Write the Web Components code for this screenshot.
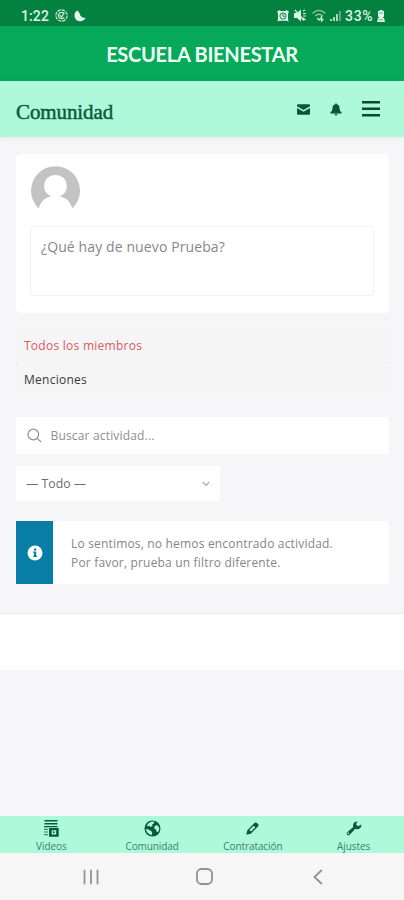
<!DOCTYPE html>
<html lang="es">
<head>
<meta charset="utf-8">
<title>Escuela Bienestar</title>
<style>
html,body{margin:0;height:900px;overflow:hidden}
body{background:#f6f6f8;font-family:"Open Sans","Noto Sans",sans-serif}
</style>
</head>
<body>
<community-app></community-app>
<script>
function define(name, css, html) {
  const t = document.createElement('template');
  t.innerHTML = '<style>*{box-sizing:border-box}svg{display:block}' + css + '</style>' + html;
  customElements.define(name, class extends HTMLElement {
    constructor() {
      super();
      this.attachShadow({mode: 'open'}).append(t.content.cloneNode(true));
    }
  });
}

define('status-bar', `
:host{display:flex;height:26px;background:#04803f;color:#dcf6e5;align-items:center;padding:5px 19px 0 21px;box-sizing:border-box;font:500 14px/20px Roboto,sans-serif}
.time{width:34px;font-size:14px;white-space:nowrap;letter-spacing:.1px}
.bat{font-size:14px;letter-spacing:.7px;margin-left:4px;width:32px;white-space:nowrap}
.sp{flex:1}`, `
<span class="time">1:22</span>
<svg width="13" height="13" viewBox="0 0 13 13" fill="none" stroke="#cdeedb" stroke-width="1.2"><circle cx="6.5" cy="6.5" r="5.6" stroke-dasharray="3.4 .9"/><path d="M9.3 8.2A3.2 3.2 0 1 1 9.5 5.2M4.7 5.8l1.8 2.3 2.6-4.2"/></svg>
<svg width="12" height="12" viewBox="0 0 12 12" fill="#e4faec" style="margin-left:6px"><path d="M3.200 .6C-.2 2.500-.2 7.500 2.200 9.700 5 12.400 10 11.800 11.700 7.600 9.800 8.200 8 7.500 6.900 6.300 5.700 5 6 2.500 3.200 .6Z"/></svg>
<span class="sp"></span>
<svg width="12" height="12" viewBox="0 0 12 12"><path d="M0 1.700 2.500 0l1 1h5l1-1L12 1.700l-1 2V9l.6 2.500-2.200-.8H2.600L.4 11.500 1 9V3.700Z" fill="#dcf6e5"/><circle cx="6" cy="6" r="3.100" fill="none" stroke="#04803f" stroke-width="1"/><path d="M6 4v2.300h1.700" fill="none" stroke="#04803f"/></svg>
<svg width="13" height="13" viewBox="0 0 13 13" style="margin-left:5px"><path d="M0 4h3l4-3.500v12L3 9H0Z" fill="#dcf6e5"/><path d="M1 1l9 10.500M9 4.500h3M9 7h3M9 2l2-1M9 9l2.500 2" stroke="#dcf6e5" stroke-width="1.200"/></svg>
<svg width="14" height="13" viewBox="0 0 14 13" fill="none" stroke="#8bc7a6" stroke-width="1.300" style="margin-left:5px"><path d="M.5 4.500Q7-1.800 13.500 4.500M3 7.100Q7 3.300 11 7.100"/><path d="M5 9l2 2 2-2M9.500 7v5l2-2" stroke="#c8ead6"/></svg>
<svg width="11" height="13" viewBox="0 0 11 13" style="margin-left:4px"><path d="M0 10h2v2H0zM3 8h2v4H3zM6 5h2v7H6z" fill="#a9d9bd"/><path d="M9 2h1.800v10H9z" fill="#66ac86"/></svg>
<span class="bat">33%</span>
<svg width="8" height="12" viewBox="0 0 8 12" fill="#dcf6e5"><path d="M2.500 0h3v1H7v5.500L5.500 8H7l1 4H0l1-4h1.500L1 6.500V1h1.500Z"/><path d="M2 3h4M2 9.800h4" stroke="#69ae88"/></svg>`);

define('title-bar', `
:host{display:flex;height:55px;background:#06a859;align-items:center;justify-content:center;color:#effff6;font:700 20px/24px Lato,sans-serif}
span{white-space:nowrap;letter-spacing:-.27px}`, `<span><slot></slot></span>`);

define('page-header', `
:host{display:flex;height:56px;background:#adf9da;align-items:center;padding:0 24px 0 16px;box-sizing:border-box;color:#0c5b3a;box-shadow:0 1px 5px rgba(60,60,90,.08)}
h1{flex:1;margin:5px 0 0;font:400 21px/26px "Liberation Serif",serif;letter-spacing:-.1px;-webkit-text-stroke:.5px #0c5b3a}`, `
<h1><slot></slot></h1>
<svg width="13" height="11" viewBox="0 0 13 11" fill="#07583a"><path d="M1 .2h11q1 0 1 1v1L6.500 6 0 2.200v-1q0-1 1-1ZM0 3.900 6.500 7.700 13 3.900v5.900q0 1-1 1H1q-1 0-1-1Z"/></svg>
<svg width="12" height="13" viewBox="0 0 12 13" fill="#07583a" style="margin-left:20px"><path d="M5.200 .4h1.600v.9Q9.500 2 9.500 5.200 9.500 8 11.600 9.200V10.500H.4V9.200Q2.500 8 2.500 5.200 2.500 2 5.200 1.300ZM4.500 11h3Q7.200 12.600 6 12.600T4.500 11Z"/></svg>
<svg width="18" height="16" viewBox="0 0 18 16" fill="#0b4b2d" style="margin-left:20px"><path d="M0 0h18v2.600H0zM0 6.500h18v2.400H0zM0 13h18v2.500H0z"/></svg>`);

define('post-form', `
:host{display:block;height:159px;background:#fff;border-radius:5px;padding:12px 15px 0 14px;box-sizing:border-box}
.box{margin-top:10px;height:70px;border:1px solid #f3f3f4;border-radius:3px;padding:10px;font-size:14px;line-height:20px;color:#86878a;white-space:nowrap;letter-spacing:.11px}`, `
<svg width="51" height="50" viewBox="0 0 51 50"><path fill-rule="evenodd" fill="#c3c3c3" d="M8.700 42.500A24.500 24.500 0 1 1 42.300 42.500C40.500 36 36.500 31.800 30.500 30.800V30C34.500 28 36.800 24.500 36.800 20.500 36.800 13 32 9 25.500 9S14.200 13 14.200 20.500C14.200 24.500 16.500 28 20.500 30V30.800C14.500 31.800 10.500 36 8.700 42.500Z"/></svg>
<div class="box"><slot></slot></div>`);

define('member-tabs', `
:host{display:block;padding:16px 8px 0;height:86px;margin:0 -2px 0 0;box-sizing:border-box;font-size:12px;line-height:34px;letter-spacing:.26px;color:#39393b;background:linear-gradient(#f6f6f7,#f5f5f5 20px,#f5f5f5 75px,#f6f6f8)}
div{height:34px;white-space:nowrap}.on{color:#dc5962}
.rule{display:flex;justify-content:space-between;height:0;margin:0 -8px}.rule i{width:2px;height:1px;background:#dfdfe0}`, `
<div class="on"><slot name="all"></slot></div><div class="rule"><i></i><i></i></div><div><slot name="mentions"></slot></div>`);

define('search-field', `
:host{display:flex;height:37px;background:#fff;align-items:center;padding:0 10px 0 11px;box-sizing:border-box;font-size:12px;letter-spacing:.17px;color:#8d8e91;gap:8.5px}
span{white-space:nowrap}`, `
<svg width="15" height="15" viewBox="0 0 15 15" fill="none" stroke="#909195" stroke-width="1.200"><circle cx="6.300" cy="6.500" r="5.300"/><path d="M10.200 10.400 14.100 14"/></svg><span><slot></slot></span>`);

define('filter-select', `
:host{display:flex;width:204px;height:35px;background:#fff;align-items:center;justify-content:space-between;padding:0 10px;box-sizing:border-box;font-size:12.300px;color:#6c6d70}`, `
<span><slot></slot></span><svg width="8" height="6" viewBox="0 0 8 6" fill="none" stroke="#aaabae" stroke-width="1.200"><path d="M.8 1 4 4.300 7.200 1"/></svg>`);

define('info-notice', `
:host{display:flex;height:63px;background:#fff;font-size:12px;line-height:19px;letter-spacing:.18px;color:#858689}
.i{width:37px;background:#087da6;display:flex;align-items:center;justify-content:center}
p{margin:0;padding:13px 0 0 18px;white-space:nowrap}`, `
<div class="i"><svg width="16" height="16" viewBox="0 0 16 16"><circle cx="8" cy="8" r="7.500" fill="#fff"/><path d="M7 3.400h2.200v2H7zM6.200 6.500h3v4.200h.8v1.300H6.200v-1.300H7V7.800h-.8z" fill="#087da6"/></svg></div>
<p><slot></slot></p>`);

define('tab-item', `
:host{flex:1 1 0;display:flex;flex-direction:column;align-items:center;padding-top:3px;font-size:10px;line-height:14px;color:#44806a}
.ic{height:18px;display:flex;align-items:center}
.t{margin-top:2px;white-space:nowrap;letter-spacing:-.08px}`, `
<div class="ic"><slot name="icon"></slot></div><div class="t"><slot></slot></div>`);

define('tab-bar', `
:host{display:flex;height:37px;background:#adf9da;padding-left:1px;box-sizing:border-box}
svg{fill:#075a3b}`, `
<tab-item><svg slot="icon" width="15" height="17" viewBox="0 0 15 17"><path d="M.5 0h13v1.500H.5zM.5 3h13v1.500H.5zM0 6h13.500v1.300H0z"/><path d="M0 8.800h4v1.200H0zM0 11.400h4v1.200H0zM0 14h4v1.200H0z" opacity=".7"/><path fill-rule="evenodd" d="M5 8h9.700v8.700H5zm2.700 2.200v4.200h4.500v-4.200zM9 11l2.200 1.300L9 13.600z"/></svg>Videos</tab-item>
<tab-item><svg slot="icon" width="17" height="17" viewBox="0 0 17 17"><circle cx="8.500" cy="8.500" r="8"/><path d="M7.200 1.700 10.200 1.600 10 3.200 8 4.500 8.700 5.800 6.600 7 5.600 5.800 4 6.400 3 5.200Q4.500 2.500 7.200 1.700ZM10.500 6.200 13 5l2.200 2.500Q15.600 10 14 12.200L12.500 11.600 12 9.500 10.300 8.800ZM1.800 9 4.500 9.500 7.500 11.200 8.300 13.200 7.500 15.200Q2.800 14 1.800 9Z" fill="#adf9da"/></svg>Comunidad</tab-item>
<tab-item><svg slot="icon" width="13" height="13" viewBox="0 0 13 13"><path fill-rule="evenodd" d="M8.700 .8Q9.700 0 10.700.8L12.200 2.300Q13 3.300 12.200 4.300L4.700 11.700.3 12.700 1.300 8.200ZM7.600 3.700 3.400 8 5 9.600 9.300 5.300Z"/></svg>Contratación</tab-item>
<tab-item><svg slot="icon" width="16" height="15" viewBox="0 0 16 15"><path fill-rule="evenodd" d="M11.600.5 9.900 3.200 12 5.200 15.400 3.600Q15.600 7 12.700 8 10.800 8.600 9.300 7.700L3.700 13.700Q2.400 14.700 1.200 13.700.1 12.500 1.200 11.200L7.300 5.900Q6.600 4.300 7.500 2.500 8.800.1 11.600.5ZM2.600 11.600a.8.8 0 1 0 .1 1.500.8.8 0 0 0-.1-1.500Z"/></svg>Ajustes</tab-item>`);

define('system-nav', `
:host{display:grid;grid-template-columns:1fr 17px 1fr;height:47px;background:#f6f6f7;align-items:center;padding:0 79px 0 83px;box-sizing:border-box}
svg{fill:none;stroke:#929294;stroke-width:1.800}
svg:last-child{justify-self:end;margin-right:2px}`, `
<svg width="16" height="16" viewBox="0 0 16 16"><path d="M1.500 .8v14.400M8 .8v14.400M14.500 .8v14.400"/></svg>
<svg width="17" height="17" viewBox="0 0 17 17"><rect x="1" y="1" width="15" height="15" rx="4.500"/></svg>
<svg width="10" height="16" viewBox="0 0 10 16"><path d="M8.800 1 1.500 8l7.300 7"/></svg>`);

define('community-app', `
:host{display:flex;flex-direction:column;width:404px;height:900px;background:#f6f6f8}
main{padding:17px 15px 0 16px;height:476px}
filter-select{margin-top:12px}search-field{margin-top:18px}info-notice{margin-top:20px}
footer{height:57px;background:#fff;border-top:1px solid #eeeef1}
.space{flex:1}`, `
<status-bar></status-bar>
<title-bar>ESCUELA BIENESTAR</title-bar>
<page-header>Comunidad</page-header>
<main>
<post-form>¿Qué hay de nuevo Prueba?</post-form>
<member-tabs><span slot="all">Todos los miembros</span><span slot="mentions">Menciones</span></member-tabs>
<search-field>Buscar actividad...</search-field>
<filter-select>— Todo —</filter-select>
<info-notice>Lo sentimos, no hemos encontrado actividad.<br>Por favor, prueba un filtro diferente.</info-notice>
</main>
<footer></footer>
<div class="space"></div>
<tab-bar></tab-bar>
<system-nav></system-nav>`);
</script>
</body>
</html>
